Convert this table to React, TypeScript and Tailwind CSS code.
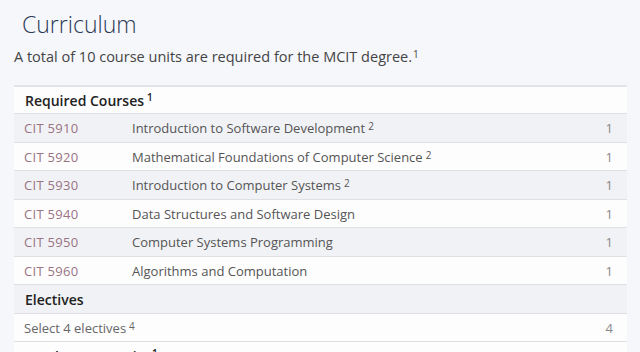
import React from 'react';

const COURSES = [
  { code: 'CIT 5910', title: 'Introduction to Software Development', note: '2', cu: '1' },
  { code: 'CIT 5920', title: 'Mathematical Foundations of Computer Science', note: '2', cu: '1' },
  { code: 'CIT 5930', title: 'Introduction to Computer Systems', note: '2', cu: '1' },
  { code: 'CIT 5940', title: 'Data Structures and Software Design', note: '', cu: '1' },
  { code: 'CIT 5950', title: 'Computer Systems Programming', note: '', cu: '1' },
  { code: 'CIT 5960', title: 'Algorithms and Computation', note: '', cu: '1' },
];

const Sup = ({ n }: { n: string }) => (
  <sup className="text-[10px] ml-[3px] relative -top-[3px]">{n}</sup>
);

export default function App() {
  return (
    <div
      className="w-[640px] h-[352px] overflow-hidden bg-[#f6f7fb] text-[#4a4a4a]"
      style={{ fontFamily: '"Open Sans", "Noto Sans", sans-serif' }}
    >
      <h1 className="pl-[22px] pt-[9px] text-[23px] leading-[30px] font-light text-[#2b3a55]">Curriculum</h1>
      <p className="pl-[14px] mt-[8px] text-[14.5px] leading-[20px] text-[#444]">
        A total of 10 course units are required for the MCIT degree.
        <sup className="text-[10px] ml-[1px] relative -top-[4px]">1</sup>
      </p>
      <div className="ml-[14px] mr-[13px] mt-[18px] border-t-2 border-[#e3e4e8]">
        <div className="h-[27px] flex items-center px-[11px] bg-[#fdfdfe] border-b border-[#dfe0e4] text-[14px] font-semibold text-[#222]">
          Required Courses<Sup n="1" />
        </div>
        {COURSES.map((c, i) => (
          <div
            key={c.code}
            className={`h-[28.5px] flex items-center px-[10px] pt-[2px] border-b border-[#dfe0e4] text-[13px] ${i % 2 === 0 ? 'bg-[#f1f2f5]' : 'bg-[#fdfdfe]'}`}
          >
            <span className="w-[108px] text-[#9a7383] tracking-[0.3px]">{c.code}</span>
            <span className="flex-1 text-[#555]">
              {c.title}
              {c.note && <Sup n={c.note} />}
            </span>
            <span className="w-[20px] text-right pr-[4px] text-[#888]">{c.cu}</span>
          </div>
        ))}
        <div className="h-[28.5px] flex items-center px-[11px] pt-[1px] bg-[#f1f2f5] border-b border-[#dfe0e4] text-[14px] font-semibold text-[#222]">
          Electives
        </div>
        <div className="h-[28.5px] flex items-center px-[10px] pt-[2px] bg-[#fdfdfe] border-b border-[#dfe0e4] text-[13px]">
          <span className="flex-1 text-[#666]">
            Select 4 electives<Sup n="4" />
          </span>
          <span className="w-[20px] text-right pr-[4px] text-[#888]">4</span>
        </div>
        <div className="h-[28px] flex items-center px-[11px] bg-[#fdfdfe] text-[14px] font-semibold text-[#222]">
          Total Course Units<Sup n="1" />
        </div>
      </div>
    </div>
  );
}
